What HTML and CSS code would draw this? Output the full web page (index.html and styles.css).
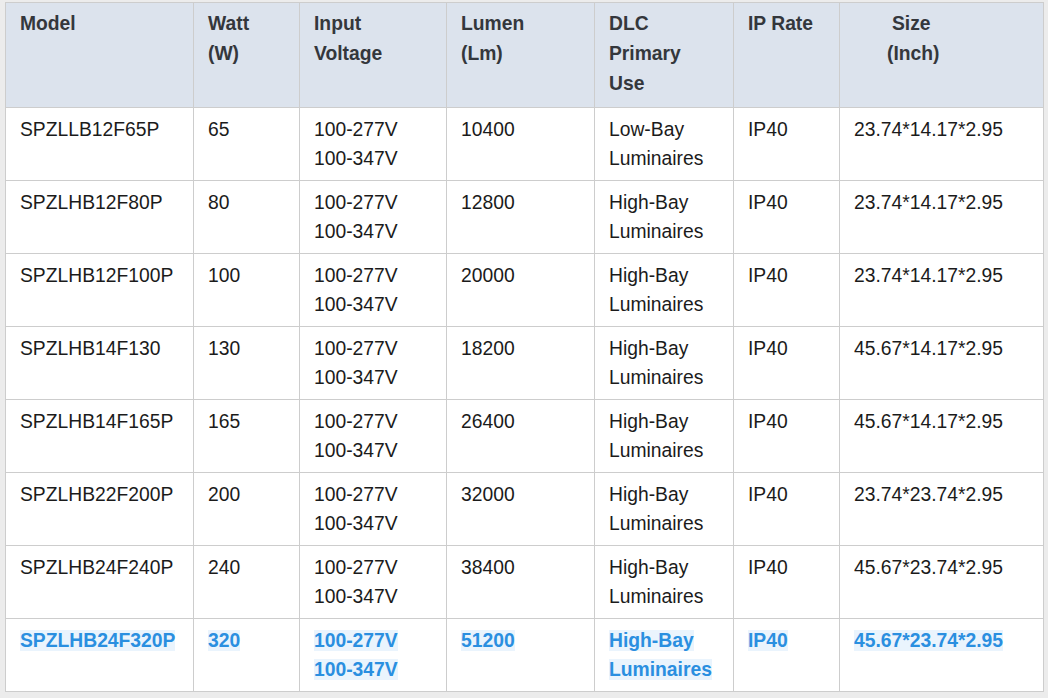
FILE: index.html
```html
<!DOCTYPE html>
<html>
<head>
<meta charset="utf-8">
<link rel="stylesheet" href="styles.css">
</head>
<body>
<table class="spec">
  <colgroup>
    <col class="c1"><col class="c2"><col class="c3"><col class="c4"><col class="c5"><col class="c6"><col class="c7">
  </colgroup>
  <thead>
    <tr>
      <th>Model</th>
      <th>Watt<br>(W)</th>
      <th>Input<br>Voltage</th>
      <th>Lumen<br>(Lm)</th>
      <th>DLC<br>Primary<br>Use</th>
      <th>IP Rate</th>
      <th><span class="sz1">Size</span><br><span class="sz2">(Inch)</span></th>
    </tr>
  </thead>
  <tbody>
    <tr><td>SPZLLB12F65P</td><td>65</td><td>100-277V<br>100-347V</td><td>10400</td><td>Low-Bay<br>Luminaires</td><td>IP40</td><td>23.74*14.17*2.95</td></tr>
    <tr><td>SPZLHB12F80P</td><td>80</td><td>100-277V<br>100-347V</td><td>12800</td><td>High-Bay<br>Luminaires</td><td>IP40</td><td>23.74*14.17*2.95</td></tr>
    <tr><td>SPZLHB12F100P</td><td>100</td><td>100-277V<br>100-347V</td><td>20000</td><td>High-Bay<br>Luminaires</td><td>IP40</td><td>23.74*14.17*2.95</td></tr>
    <tr><td>SPZLHB14F130</td><td>130</td><td>100-277V<br>100-347V</td><td>18200</td><td>High-Bay<br>Luminaires</td><td>IP40</td><td>45.67*14.17*2.95</td></tr>
    <tr><td>SPZLHB14F165P</td><td>165</td><td>100-277V<br>100-347V</td><td>26400</td><td>High-Bay<br>Luminaires</td><td>IP40</td><td>45.67*14.17*2.95</td></tr>
    <tr><td>SPZLHB22F200P</td><td>200</td><td>100-277V<br>100-347V</td><td>32000</td><td>High-Bay<br>Luminaires</td><td>IP40</td><td>23.74*23.74*2.95</td></tr>
    <tr><td>SPZLHB24F240P</td><td>240</td><td>100-277V<br>100-347V</td><td>38400</td><td>High-Bay<br>Luminaires</td><td>IP40</td><td>45.67*23.74*2.95</td></tr>
    <tr class="hl">
      <td><span class="mark">SPZLHB24F320P</span></td>
      <td><span class="mark">320</span></td>
      <td><span class="mark">100-277V</span><br><span class="mark">100-347V</span></td>
      <td><span class="mark">51200</span></td>
      <td><span class="mark">High-Bay</span><br><span class="mark">Luminaires</span></td>
      <td><span class="mark">IP40</span></td>
      <td><span class="mark">45.67*23.74*2.95</span></td>
    </tr>
  </tbody>
</table>
</body>
</html>
```
FILE: styles.css
```css
html, body {
  margin: 0;
  padding: 0;
  background: #ececec;
}
body {
  padding: 2px 5px 8px 5px;
  font-family: "Liberation Sans", Arial, sans-serif;
  font-size: 19.3px;
}
.spec {
  border-collapse: collapse;
  table-layout: fixed;
  width: 1038px;
  background: #ffffff;
  color: #1b1b1b;
}
.c1 { width: 188px; }
.c2 { width: 106px; }
.c3 { width: 147px; }
.c4 { width: 148px; }
.c5 { width: 139px; }
.c6 { width: 106px; }
.c7 { width: 204px; }
.spec th, .spec td {
  border: 1px solid #cdcdcd;
  text-align: left;
  vertical-align: top;
  padding: 7px 14px 7px 14px;
  line-height: 29px;
}
.spec th {
  background: #dce3ed;
  color: #34373c;
  font-weight: bold;
  line-height: 30px;
  padding: 6px 14px 8px 14px;
  height: 90px;
}
.spec td {
  height: 58px;
}
.sz1 { margin-left: 38px; }
.sz2 { margin-left: 33px; }
.hl td {
  color: #2a8fe0;
  font-weight: bold;
}
.mark {
  background: #eaf4fd;
}
```
